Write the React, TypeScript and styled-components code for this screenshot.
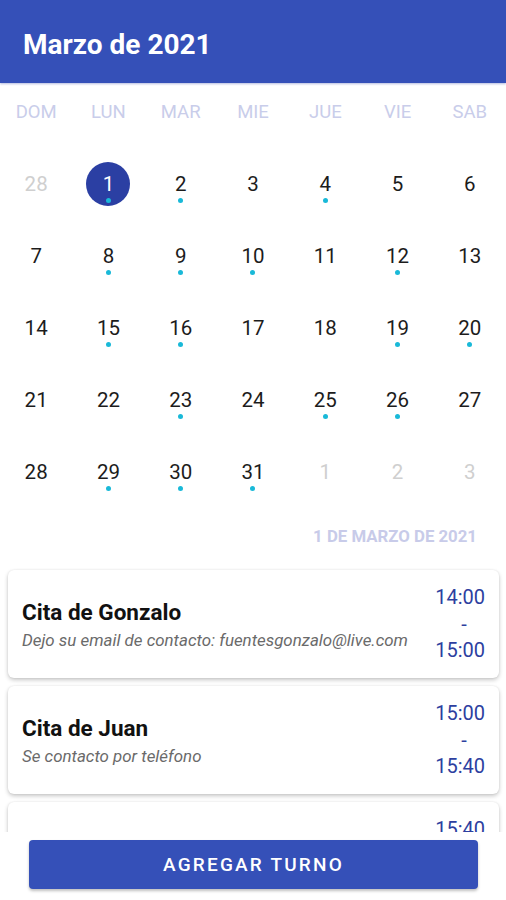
import React from "react";
import styled, { createGlobalStyle } from "styled-components";

const GlobalStyle = createGlobalStyle`
  html, body { margin: 0; padding: 0; background: #ffffff; }
  body { font-family: Roboto, "Noto Sans", "Liberation Sans", sans-serif; }
  * { box-sizing: border-box; }
`;

const Screen = styled.div`
  width: 506px;
  height: 900px;
  display: flex;
  flex-direction: column;
  overflow: hidden;
  background: #ffffff;
`;

const Header = styled.header`
  height: 83px;
  flex: none;
  background: #3550b8;
  display: flex;
  align-items: center;
  padding: 0 23px;
  box-shadow: 0 1px 2px rgba(40, 60, 160, 0.35);
`;

const Title = styled.h1`
  margin: 0;
  color: #ffffff;
  font-size: 28px;
  font-weight: 700;
  line-height: 32px;
  padding-top: 6px;
`;

const WeekRow = styled.div`
  display: grid;
  grid-template-columns: repeat(7, 1fr);
  height: 65px;
  padding-top: 18px;
  flex: none;
`;

const WeekLabel = styled.div`
  text-align: center;
  font-size: 18.5px;
  line-height: 22px;
  color: #c9cdea;
`;

const DayGrid = styled.div`
  display: grid;
  grid-template-columns: repeat(7, 1fr);
  grid-auto-rows: 72px;
  flex: none;
`;

const DayCell = styled.div`
  display: flex;
  align-items: center;
  justify-content: center;
`;

const DayBubble = styled.div<{ $selected?: boolean }>`
  width: 44px;
  height: 44px;
  border-radius: 50%;
  display: flex;
  flex-direction: column;
  align-items: center;
  padding-top: 10px;
  background: ${(p) => (p.$selected ? "#2b3fa3" : "transparent")};
`;

const DayNumber = styled.span<{ $muted?: boolean; $selected?: boolean }>`
  font-size: 20.5px;
  line-height: 24px;
  color: ${(p) => (p.$selected ? "#ffffff" : p.$muted ? "#cfcfcf" : "#1c1c1c")};
`;

const Dot = styled.span<{ $show?: boolean }>`
  width: 5px;
  height: 5px;
  margin-top: 2px;
  border-radius: 50%;
  background: ${(p) => (p.$show ? "#19b9d8" : "transparent")};
`;

const DateLabel = styled.div`
  flex: none;
  text-align: right;
  padding: 19px 29px 0 0;
  font-size: 16.8px;
  line-height: 19px;
  font-weight: 700;
  color: #c8cbe9;
`;

const List = styled.div`
  flex: 1;
  min-height: 0;
  overflow: hidden;
  display: flex;
  flex-direction: column;
  gap: 8px;
  padding: 24px 7px 0 8px;
`;

const Card = styled.div`
  flex: none;
  height: 108px;
  background: #ffffff;
  border-radius: 6px;
  box-shadow: 0 2px 4px rgba(0, 0, 0, 0.22), 0 0 2px rgba(0, 0, 0, 0.08);
  display: flex;
  align-items: center;
  justify-content: space-between;
  padding: 0 14px;
`;

const CardText = styled.div`
  display: flex;
  flex-direction: column;
  gap: 5px;
  padding-top: 2px;
`;

const CardTitle = styled.div`
  font-size: 22.5px;
  line-height: 26px;
  font-weight: 700;
  color: #111111;
`;

const CardSub = styled.div`
  font-size: 16.9px;
  line-height: 21px;
  font-style: italic;
  color: #6a6a6a;
`;

const TimeCol = styled.div`
  display: flex;
  flex-direction: column;
  align-items: flex-end;
  font-size: 20px;
  line-height: 26.5px;
  color: #2d3f9f;
`;

const Dash = styled.span`
  align-self: center;
  padding-left: 8px;
`;

const Footer = styled.div`
  flex: none;
  height: 68px;
  background: #ffffff;
  padding: 8px 28px 11px 29px;
  display: flex;
`;

const AddButton = styled.button`
  flex: 1;
  border: none;
  border-radius: 4px;
  background: #3550b8;
  color: #ffffff;
  font-family: Roboto, "Liberation Sans", sans-serif;
  font-size: 19px;
  font-weight: 500;
  letter-spacing: 2.2px;
  box-shadow: 0 2px 3px rgba(0, 0, 0, 0.25);
  cursor: pointer;
`;

const weekdays = ["DOM", "LUN", "MAR", "MIE", "JUE", "VIE", "SAB"];

type Day = { n: number; muted?: boolean; dot?: boolean; selected?: boolean };

const dotted = new Set([1, 2, 4, 8, 9, 10, 12, 15, 16, 19, 20, 23, 25, 26, 29, 30, 31]);

const days: Day[] = [
  { n: 28, muted: true },
  ...Array.from({ length: 31 }, (_, i) => ({
    n: i + 1,
    dot: dotted.has(i + 1),
    selected: i === 0,
  })),
  { n: 1, muted: true },
  { n: 2, muted: true },
  { n: 3, muted: true },
];

const appointments = [
  {
    title: "Cita de Gonzalo",
    sub: "Dejo su email de contacto: fuentesgonzalo@live.com",
    from: "14:00",
    to: "15:00",
  },
  { title: "Cita de Juan", sub: "Se contacto por teléfono", from: "15:00", to: "15:40" },
  { title: "", sub: "", from: "15:40", to: "16:00" },
];

export default function App() {
  return (
    <>
      <GlobalStyle />
      <Screen>
        <Header>
          <Title>Marzo de 2021</Title>
        </Header>
        <WeekRow>
          {weekdays.map((w) => (
            <WeekLabel key={w}>{w}</WeekLabel>
          ))}
        </WeekRow>
        <DayGrid>
          {days.map((d, i) => (
            <DayCell key={i}>
              <DayBubble $selected={d.selected}>
                <DayNumber $muted={d.muted} $selected={d.selected}>
                  {d.n}
                </DayNumber>
                <Dot $show={d.dot} />
              </DayBubble>
            </DayCell>
          ))}
        </DayGrid>
        <DateLabel>1 DE MARZO DE 2021</DateLabel>
        <List>
          {appointments.map((a, i) => (
            <Card key={i}>
              <CardText>
                <CardTitle>{a.title}</CardTitle>
                <CardSub>{a.sub}</CardSub>
              </CardText>
              <TimeCol>
                <span>{a.from}</span>
                <Dash>-</Dash>
                <span>{a.to}</span>
              </TimeCol>
            </Card>
          ))}
        </List>
        <Footer>
          <AddButton>AGREGAR TURNO</AddButton>
        </Footer>
      </Screen>
    </>
  );
}
